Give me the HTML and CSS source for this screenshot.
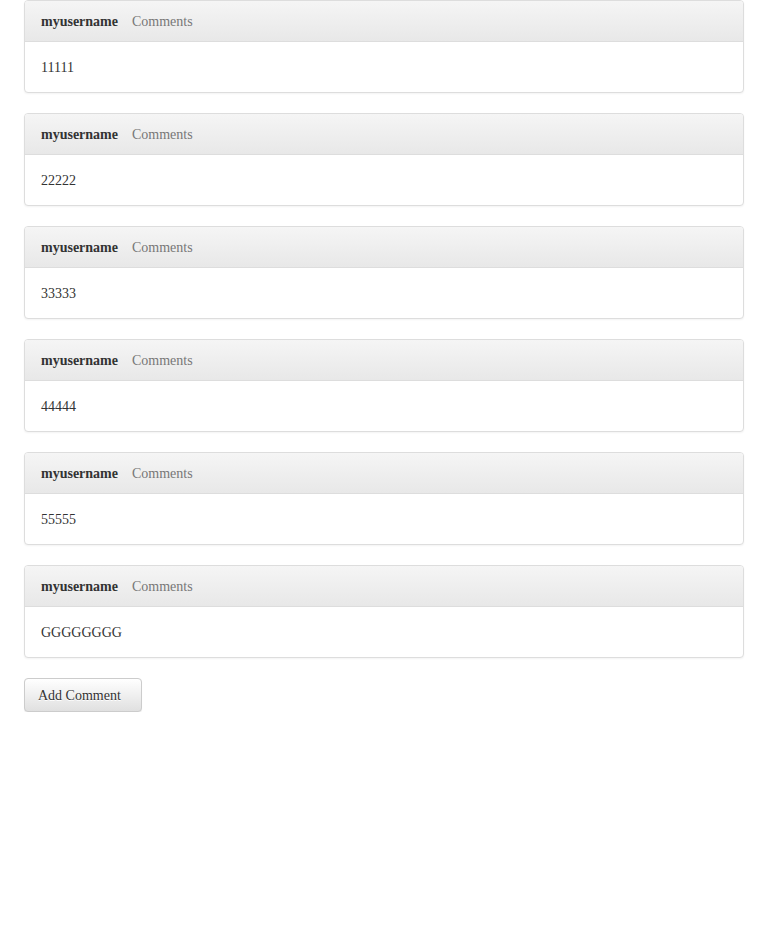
FILE: index.html
```html
<!DOCTYPE html>
<html>
<head>
<meta charset="utf-8">
<link rel="stylesheet" href="styles.css">
</head>
<body>
<div class="list">
  <div class="panel">
    <div class="panel-heading"><strong class="user">myusername</strong><span class="muted">Comments</span></div>
    <div class="panel-body">11111</div>
  </div>
  <div class="panel">
    <div class="panel-heading"><strong class="user">myusername</strong><span class="muted">Comments</span></div>
    <div class="panel-body">22222</div>
  </div>
  <div class="panel">
    <div class="panel-heading"><strong class="user">myusername</strong><span class="muted">Comments</span></div>
    <div class="panel-body">33333</div>
  </div>
  <div class="panel">
    <div class="panel-heading"><strong class="user">myusername</strong><span class="muted">Comments</span></div>
    <div class="panel-body">44444</div>
  </div>
  <div class="panel">
    <div class="panel-heading"><strong class="user">myusername</strong><span class="muted">Comments</span></div>
    <div class="panel-body">55555</div>
  </div>
  <div class="panel">
    <div class="panel-heading"><strong class="user">myusername</strong><span class="muted">Comments</span></div>
    <div class="panel-body">GGGGGGGG</div>
  </div>
  <button class="btn" type="button">Add Comment</button>
</div>
</body>
</html>
```
FILE: styles.css
```css
html, body {
  margin: 0;
  padding: 0;
  background: #fff;
}
body {
  font-family: "Liberation Serif", "Times New Roman", serif;
  font-size: 14px;
  line-height: 20px;
  color: #333;
}
.list {
  padding: 0 25px 0 24px;
}
.panel {
  margin-bottom: 20px;
  background: #fff;
  border: 1px solid #ddd;
  border-radius: 4px;
  box-shadow: 0 1px 2px rgba(0,0,0,.05);
}
.panel-heading {
  padding: 11px 15px 9px 16px;
  border-bottom: 1px solid #ddd;
  border-top-left-radius: 3px;
  border-top-right-radius: 3px;
  background-image: linear-gradient(to bottom, #f5f5f5 0%, #e8e8e8 100%);
  color: #333;
}
.user {
  font-weight: bold;
  margin-right: 14px;
}
.muted {
  color: #777;
}
.panel-body {
  padding: 16px 15px 14px 16px;
}
.btn {
  display: inline-block;
  font-family: "Liberation Serif", "Times New Roman", serif;
  font-size: 14px;
  line-height: 20px;
  padding: 7px 20px 5px 13px;
  color: #333;
  border: 1px solid #ccc;
  border-radius: 4px;
  background-image: linear-gradient(to bottom, #fff 0%, #e0e0e0 100%);
  box-shadow: inset 0 1px 0 rgba(255,255,255,.15), 0 1px 1px rgba(0,0,0,.075);
  text-shadow: 0 1px 0 #fff;
  cursor: pointer;
}
```
